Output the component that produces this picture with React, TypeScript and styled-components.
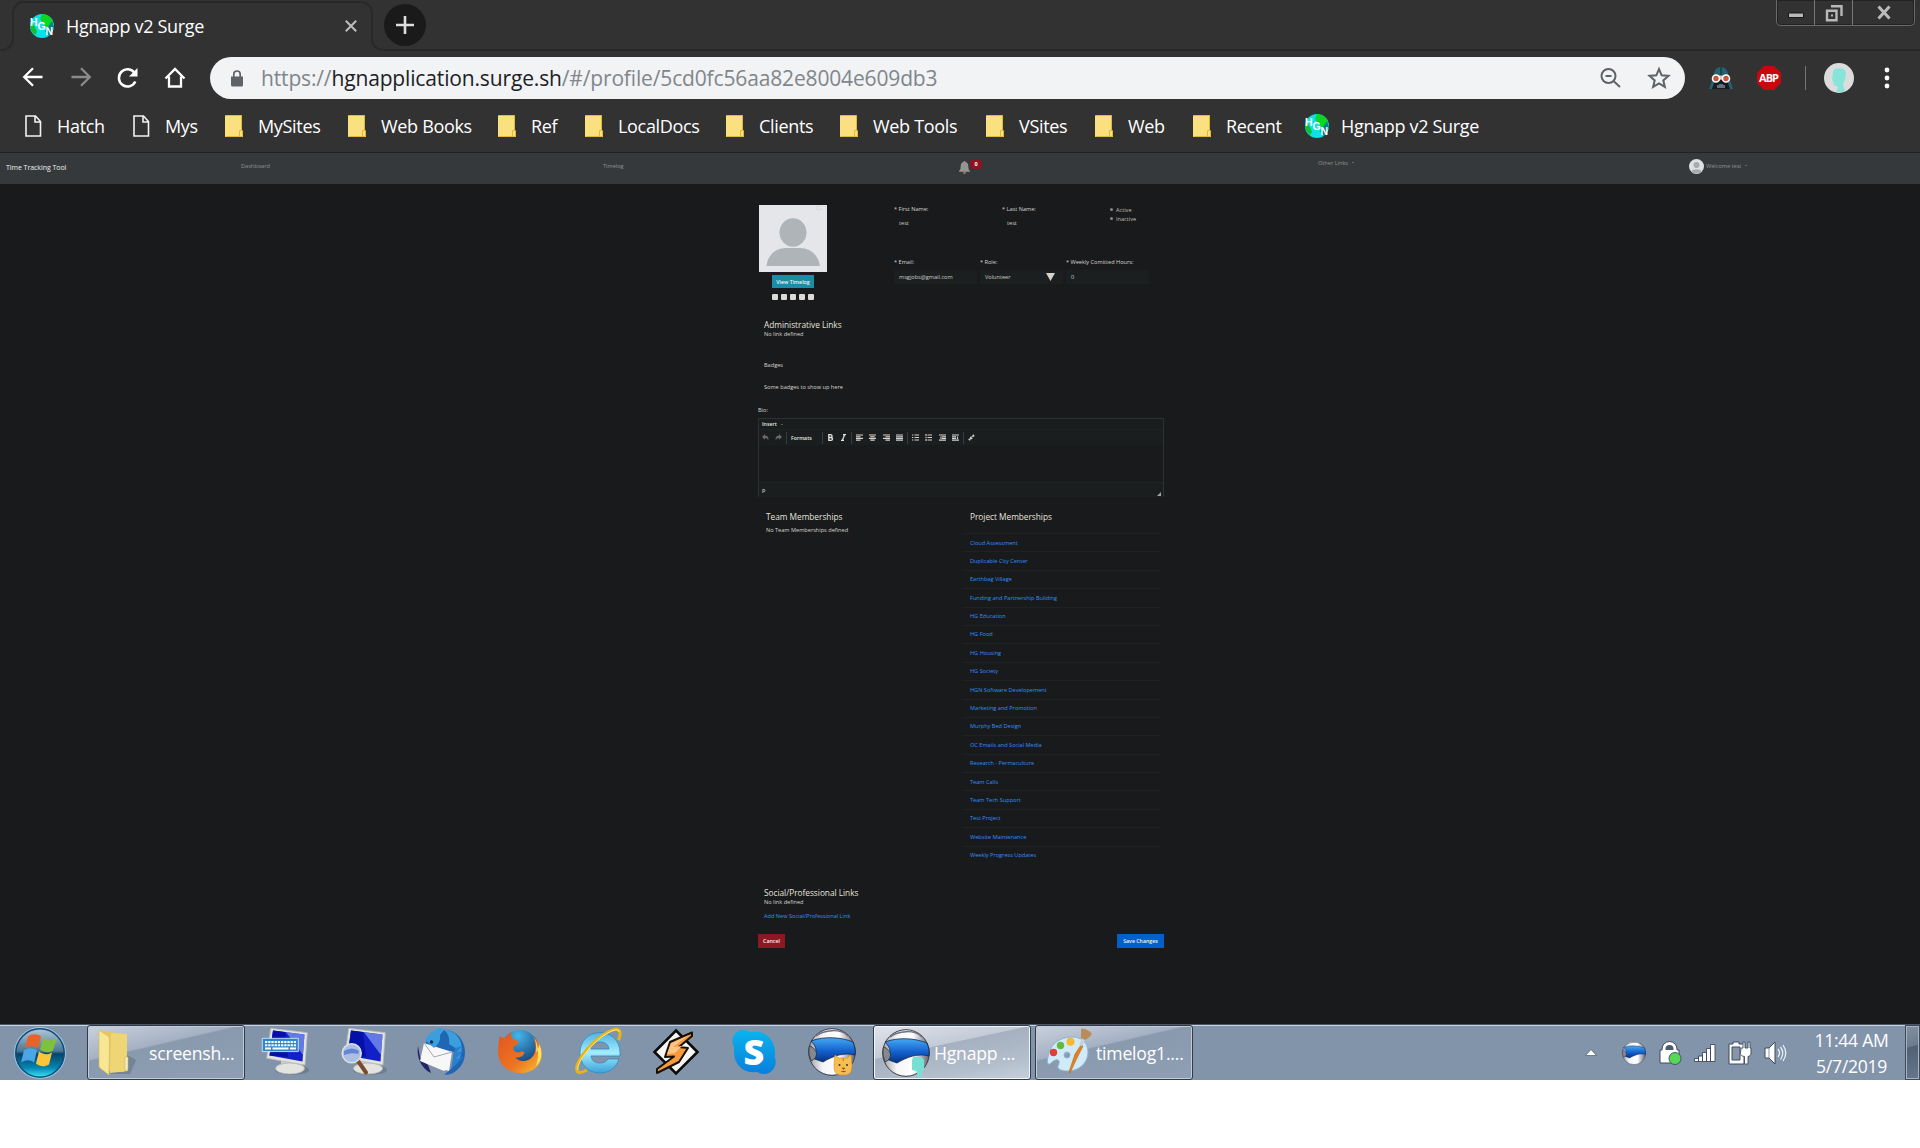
import React from "react";
import styled, { createGlobalStyle } from "styled-components";

const Global = createGlobalStyle`
  * { box-sizing: border-box; }
  body { margin: 0; background: #fff; font-family: "Open Sans", "Noto Sans", sans-serif; }
  svg { display: block; flex: none; overflow: visible; }
`;

const Screen = styled.div`
  width: 1920px;
  height: 1148px;
  display: flex;
  flex-direction: column;
  background: #fff;
  overflow: hidden;
`;

/* ---------- browser chrome ---------- */
const Chrome = styled.header`
  height: 153px;
  flex: none;
  background: #323232;
  color: #fff;
  border-bottom: 1px solid #222324;
`;

const TabStrip = styled.div`
  height: 51px;
  display: flex;
`;
const StripLeft = styled.div`
  width: 14px;
  height: 26px;
  margin-top: 25px;
  border: 2px solid #292929;
  border-width: 0 2px 2px 0;
  border-radius: 0 0 12px 0;
`;
const Tab = styled.div`
  position: relative;
  width: 361px;
  margin-left: -2px;
  height: 51px;
  padding: 0 16px 0 18px;
  display: flex;
  align-items: center;
  &::before {
    content: "";
    position: absolute;
    inset: 1px 0 24px 0;
    border: 2px solid #292929;
    border-bottom: 0;
    border-radius: 12px 12px 0 0;
  }
`;
const TabTitle = styled.span`
  flex: 1;
  margin-left: 12px;
  font-size: 18px;
  line-height: 24px;
  letter-spacing: -0.32px;
  white-space: nowrap;
`;
const StripRight = styled.div`
  flex: 1;
  margin-left: -2px;
  height: 51px;
  position: relative;
  display: flex;
  justify-content: space-between;
  &::before {
    content: "";
    position: absolute;
    inset: 25px 0 0 0;
    border: 2px solid #292929;
    border-width: 0 0 2px 2px;
    border-radius: 0 0 0 12px;
  }
`;
const NewTab = styled.button`
  position: relative;
  width: 42px;
  height: 42px;
  margin: 4px 0 0 13px;
  padding: 0;
  border: 0;
  border-radius: 50%;
  background: #1a1a1a;
  display: grid;
  place-items: center;
`;
const WindowControls = styled.div`
  position: relative;
  display: flex;
  width: 139px;
  height: 26px;
  margin-right: 5px;
  border: 1px solid #6a6a6a;
  border-top: 0;
  border-radius: 0 0 5px 5px;
  box-shadow: inset 0 0 0 1px #222;
`;
const WinButton = styled.div<{ $w: number }>`
  width: ${(p) => p.$w}px;
  display: grid;
  place-items: center;
  & + & { border-left: 1px solid #777; }
`;

const Toolbar = styled.div`
  height: 54px;
  padding: 0 22px;
  display: flex;
  align-items: center;
`;
const NavIcons = styled.div`
  width: 188px;
  display: flex;
  gap: 24px;
`;
const Omnibox = styled.div`
  width: 1475px;
  height: 42px;
  border-radius: 21px;
  background: #f1f3f5;
  display: flex;
  align-items: center;
  padding: 0 15px 0 21px;
`;
const Url = styled.span`
  flex: 1;
  margin-left: 18px;
  font-size: 21px;
  line-height: 30px;
  letter-spacing: -0.15px;
  color: #80868b;
  white-space: nowrap;
  b { font-weight: 400; color: #202124; }
`;
const OmniIcons = styled.div`
  display: flex;
  gap: 26px;
`;
const Extensions = styled.div`
  flex: 1;
  display: flex;
  align-items: center;
  padding-left: 24px;
`;
const Divider = styled.i`
  width: 1px;
  height: 24px;
  margin: 0 18px 0 24px;
  background: #777;
`;

const Bookmarks = styled.div`
  height: 42px;
  padding-left: 25px;
  display: flex;
  align-items: center;
`;
const Bookmark = styled.div<{ $w: number; $gap?: number }>`
  width: ${(p) => p.$w}px;
  display: flex;
  align-items: center;
  gap: ${(p) => p.$gap ?? 15}px;
  font-size: 18px;
  line-height: 24px;
  letter-spacing: -0.32px;
  white-space: nowrap;
`;

/* ---------- application ---------- */
const Page = styled.main`
  height: 871px;
  flex: none;
  background: #181a1b;
  color: #d8d5d0;
  font-size: 5.6px;
  line-height: 8px;
`;
const NavBar = styled.nav`
  height: 31px;
  background: #35393b;
  display: flex;
  padding-left: 6px;
  color: #96928b;
`;
const NavCell = styled.div<{ $w: number; $top: number }>`
  width: ${(p) => p.$w}px;
  padding-top: ${(p) => p.$top}px;
  display: flex;
  align-items: flex-start;
  white-space: nowrap;
`;
const Brand = styled.span`
  color: #f0efed;
  font-size: 7px;
  line-height: 10px;
  letter-spacing: -0.05px;
`;
const Caret = styled.i`
  margin: 3px 0 0 4px;
  border: 1.5px solid transparent;
  border-top-color: #96928b;
  border-bottom: 0;
`;
const Count = styled.span`
  width: 12px;
  height: 9px;
  margin-top: -1px;
  border-radius: 3px;
  background: #8d1420;
  color: #fff;
  font-size: 5.5px;
  line-height: 9px;
  font-weight: 700;
  text-align: center;
`;
const WelcomeText = styled.span`
  margin: 3px 0 0 2px;
  & + i { margin-top: 6px; }
`;

const Profile = styled.div`
  width: 406px;
  margin-left: 758px;
  padding-top: 21px;
  display: flex;
  flex-direction: column;
`;
const TopRow = styled.section`
  height: 107px;
  display: flex;
`;
const PhotoColumn = styled.div`
  width: 136px;
  padding-left: 1px;
`;
const PhotoActions = styled.div`
  width: 68px;
  display: flex;
  flex-direction: column;
  align-items: center;
`;
const Button = styled.button<{ $bg: string; $w: number; $h: number }>`
  width: ${(p) => p.$w}px;
  height: ${(p) => p.$h}px;
  padding: 0;
  border: 0;
  background: ${(p) => p.$bg};
  color: #f3f2f0;
  font: 600 5.3px/8px "Open Sans", "Noto Sans", sans-serif;
  letter-spacing: -0.03px;
  white-space: nowrap;
`;
const Squares = styled.div`
  display: flex;
  gap: 3px;
  margin-top: 6px;
  i { width: 6px; height: 6px; border-radius: 1px; background: #dcdad6; }
`;
const Fields = styled.div`
  flex: 1;
`;
const NameRow = styled.div`
  display: flex;
  height: 53px;
`;
const Field = styled.div<{ $w: number }>`
  width: ${(p) => p.$w}px;
  white-space: nowrap;
`;
const Value = styled.div<{ $filled?: boolean }>`
  height: 14px;
  margin-top: ${(p) => (p.$filled ? 4 : 3)}px;
  padding: 0 8px 0 5px;
  line-height: 14px;
  color: #cfccc5;
  display: flex;
  align-items: center;
  justify-content: space-between;
  background: ${(p) => (p.$filled ? "#1c1f20" : "transparent")};
`;
const Choice = styled.div`
  height: 9px;
  display: flex;
  align-items: center;
  gap: 3px;
  color: #c3bfb8;
  i { width: 3px; height: 3px; border-radius: 50%; background: #8a8780; }
`;
const InputRow = styled.div`
  display: flex;
  gap: 3px;
`;
const Card = styled.section<{ $h: number; $mt?: number; $pt?: number }>`
  height: ${(p) => p.$h}px;
  margin: ${(p) => p.$mt ?? 0}px -1px 0 -2px;
  padding: ${(p) => p.$pt ?? 0}px 0 0 7px;
  border: 1px solid #191c1d;
  border-radius: 2px;
`;
const Heading = styled.h2`
  margin: 0;
  font-size: 8.3px;
  line-height: 12px;
  font-weight: 500;
  letter-spacing: -0.02px;
  color: #e6e3de;
`;
const Line = styled.div<{ $mt?: number }>`
  margin-top: ${(p) => p.$mt ?? 0}px;
  white-space: nowrap;
`;
const LinkText = styled.a`
  color: #3391ff;
`;

const Editor = styled.section`
  height: 79px;
  width: 406px;
  margin-top: 4px;
  border: 1px solid #2d3132;
  border-bottom-color: #1d2021;
  display: flex;
  flex-direction: column;
  color: #e8e6e3;
`;
const MenuBar = styled.div`
  height: 11px;
  padding-left: 3px;
  display: flex;
  align-items: center;
  background: #1a1d1e;
  border-bottom: 1px solid #202324;
  font-weight: 600;
  font-size: 5.2px;
`;
const Tools = styled.div`
  height: 15px;
  padding-left: 3px;
  display: flex;
  align-items: center;
  background: #1b1e1f;
`;
const ToolGroup = styled.div<{ $w: number }>`
  width: ${(p) => p.$w}px;
  height: 12px;
  display: flex;
  align-items: center;
  gap: 6.4px;
  font-size: 5.2px;
  font-weight: 600;
  & + & { border-left: 1px solid #373c3e; padding-left: 4px; }
`;
const Canvas = styled.div`
  flex: 1;
  border-bottom: 1px solid #202324;
`;
const Status = styled.div`
  height: 13px;
  padding: 0 2px 0 3px;
  background: #1b1e1f;
  display: flex;
  justify-content: space-between;
  align-items: center;
  svg { align-self: flex-end; }
`;
const Columns = styled.div`
  height: 377px;
  display: flex;
  padding-top: 14px;
`;
const Team = styled.div`
  width: 204px;
  padding-left: 8px;
`;
const Projects = styled.div`
  width: 199px;
`;
const ProjectTitle = styled.div`
  padding-left: 8px;
  height: 22px;
`;
const ProjectRow = styled.div`
  height: 18.4px;
  padding: 4.5px 0 0 8px;
  border-top: 1px solid #1f2223;
`;
const Footer = styled.div`
  display: flex;
  justify-content: space-between;
  margin-top: 6px;
`;

/* ---------- taskbar ---------- */
const TaskbarRoot = styled.footer`
  height: 56px;
  flex: none;
  display: flex;
  background: #8294aa;
  border-top: 1px solid #4c5666;
  box-shadow: inset 0 1px 0 #c9d3e0;
  color: #fff;
`;
const Start = styled.div`
  width: 87px;
  padding: 2px 0 0 14px;
`;
const TaskButton = styled.div<{ $active?: boolean; $gap: number; $pad: number }>`
  width: 158px;
  height: 55px;
  padding-left: ${(p) => p.$pad}px;
  display: flex;
  align-items: center;
  gap: ${(p) => p.$gap}px;
  border: 1px solid #303a49;
  border-radius: 3px;
  box-shadow: inset 0 0 0 1px ${(p) => (p.$active ? "#f3f6fa" : "#c2ccd8")};
  background: ${(p) =>
    p.$active
      ? "linear-gradient(168deg,#dfe4ec 0%,#c4cbd7 38%,#a5b0c0 39%,#b4bfcd 75%,#c6d0dc 100%)"
      : "linear-gradient(167deg,#c9d1dd 0%,#a5b1c3 38%,#8999ae 40%,#8e9fb4 100%)"};
  font-size: 17.6px;
  line-height: 24px;
  letter-spacing: -0.2px;
  white-space: nowrap;
`;
const Pinned = styled.div`
  width: 628px;
  padding-top: 3px;
  display: flex;
  & > div { width: 78.2px; padding-left: 16px; }
`;
const Tray = styled.div`
  flex: 1;
  display: flex;
  align-items: center;
  justify-content: flex-end;
`;
const TrayIcons = styled.div`
  display: flex;
  align-items: center;
  gap: 12px;
`;
const Clock = styled.div`
  width: 118px;
  display: flex;
  flex-direction: column;
  align-items: center;
  font-size: 17.6px;
  line-height: 26px;
  letter-spacing: -0.3px;
  padding: 1px 2px 0 13px;
`;
const ShowDesktop = styled.div`
  width: 15px;
  height: 55px;
  border: 1px solid #3e4a5a;
  box-shadow: inset 0 0 0 1px #a6b3c2;
  background: linear-gradient(165deg, #8290a2 0%, #6c7b8f 38%, #526174 40%, #66778c 100%);
`;

/* ---------- drawings ---------- */
const HgnIcon = () => (
  <svg width="24" height="24" viewBox="0 0 24 24">
    <circle cx="12" cy="12" r="12" fill="#0ae0e8" />
    <path d="M12 0a12 12 0 0 1 11 8l-6 6-4-5-3-4z" fill="#08d820" />
    <path d="M1 8l4 5 2 5-2 3A12 12 0 0 1 1 8z" fill="#0bc22a" />
    <path d="M22 7l2 6-5 9-4-5z" fill="#087f86" />
    <g fill="#fff" fontFamily="Liberation Sans, sans-serif" fontWeight="700" fontSize="10.5">
      <text x="0" y="11.5">H</text>
      <text x="7.5" y="16">G</text>
      <text x="15.5" y="20.5">N</text>
    </g>
  </svg>
);
const PageIcon = () => (
  <svg width="17" height="22" viewBox="0 0 17 22" fill="none" stroke="#f2f2f2" strokeWidth="1.6">
    <path d="M1 1h9.5l5 5.5V21H1zM10 1v6h5.5" />
  </svg>
);
const FolderIcon = () => (
  <svg width="18" height="22" viewBox="0 0 18 22">
    <path d="M0 .5h17V16l1 1v5H0z" fill="#fbe07f" />
    <path d="M.5.5h16V15M.5 21.5h17V15.500h-3v6" fill="none" stroke="#e2b93b" />
  </svg>
);
const PersonIcon = ({ w, h }: { w: number; h: number }) => (
  <svg width={w} height={h} viewBox="0 0 68 67">
    <path d="M0 0h68v67H0z" fill="#e5e6e9" />
    <ellipse cx="34" cy="27.500" rx="13.500" ry="14.300" fill="#aeb4b8" />
    <path d="M7.500 61C8.500 50 17 43 27 43h14c10 0 18.500 7 20 18z" fill="#aeb4b8" />
    {w > 20 && <path d="M58 1h3M58 1v4h4V3" fill="none" stroke="#d5d7da" />}
  </svg>
);
const RoundPerson = () => (
  <svg width="15" height="15" viewBox="0 0 15 15">
    <circle cx="7.500" cy="7.500" r="7.500" fill="#dfe0e1" />
    <circle cx="7.500" cy="6" r="3" fill="#a7abae" />
    <path d="M2.300 12.500c1-3 9.400-3 10.400 0a7.500 7.500 0 0 1-10.400 0z" fill="#a7abae" />
  </svg>
);
const Bell = () => (
  <svg width="11" height="13" viewBox="0 0 11 13" fill="#96958f">
    <path d="M5.500 0c.7 0 1 .5 1 1 2 .5 2.800 2 2.800 4 0 3 .6 4 1.700 5v.8H0V10c1.100-1 1.700-2 1.700-5 0-2 .8-3.500 2.800-4 0-.5.300-1 1-1zM4 11.300h3a1.500 1.500 0 0 1-3 0z" />
  </svg>
);

const BackIcon = ({ color, flip }: { color: string; flip?: boolean }) => (
  <svg width="21" height="20" viewBox="0 0 21 20" fill="none" stroke={color} strokeWidth="2.300">
    <path transform={flip ? "matrix(-1 0 0 1 21 0)" : undefined} d="M20.500 10H2.500M11 1.200L2.200 10l8.800 8.800" />
  </svg>
);
const ReloadIcon = () => (
  <svg width="24" height="22" viewBox="0 0 24 22" fill="none" stroke="#fff" strokeWidth="2.500">
    <path d="M19.300 14.500A8.600 8.600 0 1 1 18.600 6" />
    <path d="M21.500 1v8.500H13z" fill="#fff" stroke="none" />
  </svg>
);
const HomeIcon = () => (
  <svg width="22" height="22" viewBox="0 0 22 22" fill="none" stroke="#fff" strokeWidth="2.300">
    <path d="M1.500 11.500L11 2l9.500 9.500M5 9.500v10h12v-10" />
  </svg>
);
const LockIcon = () => (
  <svg width="12" height="17" viewBox="0 0 12 17">
    <path d="M0 6.500h12V15a1.500 1.500 0 0 1-1.500 1.500h-9A1.500 1.500 0 0 1 0 15z" fill="#5f6368" />
    <path d="M2.800 7V4.200a3.200 3.200 0 0 1 6.400 0V7" fill="none" stroke="#5f6368" strokeWidth="1.700" />
  </svg>
);
const ZoomOutIcon = () => (
  <svg width="22" height="22" viewBox="0 0 22 22" fill="none" stroke="#5f6368" strokeWidth="2">
    <circle cx="8.500" cy="9" r="7" />
    <path d="M5.500 9h6M13.500 14l6.500 6" />
  </svg>
);
const StarIcon = () => (
  <svg width="22" height="22" viewBox="0 0 24 24" fill="none" stroke="#5f6368" strokeWidth="2.200">
    <path d="M12 2.200l2.900 6.900 7.400.6-5.600 4.900 1.700 7.200-6.400-3.900-6.400 3.900 1.700-7.200-5.600-4.900 7.400-.6z" />
  </svg>
);
const VaderIcon = () => (
  <svg width="24" height="24" viewBox="0 0 24 24">
    <path d="M12 1c5 0 7 4 7.500 9L24 23H0l4.500-13C5 5 7 1 12 1z" fill="#25616f" />
    <path d="M6 14h12l3 9H3z" fill="#151b25" />
    <path d="M12 1v9" stroke="#122b34" />
    <path d="M4 9.500h16v4H4z" fill="#e6c7b5" />
    <g fill="#c4573c" stroke="#fff" strokeWidth="1.600">
      <circle cx="7" cy="12.500" r="3.500" />
      <circle cx="17" cy="12.500" r="3.500" />
    </g>
    <path d="M9 19v3M11 18v4M13 18v4M15 19v3" stroke="#c7d8e0" strokeWidth=".9" />
  </svg>
);
const AbpIcon = () => (
  <svg width="24" height="24" viewBox="0 0 24 24">
    <path d="M7 0h10l7 7v10l-7 7H7l-7-7V7z" fill="#c9080d" />
    <text x="12" y="16" textAnchor="middle" fontFamily="Open Sans, sans-serif" fontWeight="700" fontSize="11" fill="#fff" textLength="20">ABP</text>
  </svg>
);
const ProfileHead = () => (
  <svg width="30" height="30" viewBox="0 0 30 30">
    <circle cx="15" cy="15" r="15" fill="#dcdcdc" />
    <path d="M11 6c4-1.500 9-1 10.500 2 1 3 0 8-1.500 11l-1 3 2 6-4 1.500-5-1 2-4-1-1.500c-3 0-3.500-1-3.500-4l-1.500-2 .500-3c0-4 .5-7 2.500-8z" fill="#86e5d8" />
  </svg>
);

const WinFlag = () => (
  <g>
    <path d="M15 10c4-3 9-3 13 0l-3 12c-4-3-9-3-13 0z" fill="#e8622a" />
    <path d="M30 11c4 3 9 4 14 1l-4 12c-4 3-9 2-13-1z" fill="#7fc043" />
    <path d="M11 24c4-3 9-3 13 0l-3 12c-4-3-8-3-13 0z" fill="#4aa6e6" />
    <path d="M26 25c4 3 9 4 13 1l-3 12c-5 3-9 2-13-1z" fill="#fcc63a" />
  </g>
);
const StartOrb = () => (
  <svg width="52" height="52" viewBox="0 0 52 52">
    <defs>
      <linearGradient id="orbTop" x1="0" y1="0" x2="0" y2="1">
        <stop offset="0" stopColor="#b7cad8" />
        <stop offset=".46" stopColor="#4b7996" />
        <stop offset=".52" stopColor="#064367" />
        <stop offset=".8" stopColor="#0788b5" />
        <stop offset="1" stopColor="#3ff5ff" />
      </linearGradient>
    </defs>
    <circle cx="26" cy="26" r="25.300" fill="url(#orbTop)" stroke="#9bc9e6" strokeWidth="1.200" />
    <circle cx="26" cy="26" r="24.200" fill="none" stroke="#124a76" strokeWidth="1.400" />
    <g transform="translate(-1 -.5)"><WinFlag /></g>
  </svg>
);
const TaskFolder = () => (
  <svg width="35" height="48" viewBox="0 0 35 48">
    <path d="M28 26l9 5-6 14-20 0z" fill="#5d6b7d" opacity=".5" />
    <path d="M1 2l27 3v36l-4 2-14-1z" fill="#e4c75e" />
    <path d="M12 4l16 1v24l1 2v11l-18 2z" fill="#efd675" />
    <path d="M0 1l9 6c1 1 1.500 2 1.500 4L10 46 1 39C0 38 0 37 0 36z" fill="#f8e695" stroke="#d8bc57" strokeWidth=".7" />
    <path d="M26 28h3v12l-3 2z" fill="#f4eed2" stroke="#d0b452" strokeWidth=".6" />
  </svg>
);
const MonitorBase = () => (
  <g>
    <ellipse cx="31" cy="42" rx="17" ry="5" fill="#4e5d70" opacity=".4" />
    <path d="M20 32h13l2 5H20z" fill="#cfcfca" />
    <ellipse cx="29" cy="40.500" rx="14.500" ry="5.500" fill="#e3e3df" stroke="#b3b4b2" strokeWidth=".8" />
    <path d="M9.700 .3L46.300 4.700 44 37 5.700 30.300z" fill="#e3e4df" stroke="#b9bbb8" strokeWidth=".8" />
    <path d="M12 2.500L43.500 6.500 41.500 33.500 8.500 27.500z" fill="#1220c8" />
    <path d="M25 4.200L43.500 6.500 42 27z" fill="#7f97ee" opacity=".75" />
    <path d="M12 2.500L24 4l3 25-18.500-1.500z" fill="#0510a8" />
  </g>
);
const KeyboardMonitor = () => (
  <svg width="48" height="48" viewBox="0 0 48 48">
    <MonitorBase />
    <path d="M1.300 10.300h36v13.300h-36z" fill="#2f86c8" stroke="#cfe6f5" strokeWidth=".9" />
    <g stroke="#fff" strokeWidth="2">
      <path d="M4 14h31M4 17.300h31" strokeDasharray="2.300 .9" />
      <path d="M4 20.600h6M11.500 20.600h16M29 20.600h6" />
    </g>
  </svg>
);
const SearchMonitor = () => (
  <svg width="48" height="48" viewBox="0 0 48 48">
    <MonitorBase />
    <path d="M19 33l8 11.500" stroke="#7a4c2c" strokeWidth="4" strokeLinecap="round" />
    <circle cx="12.700" cy="25.300" r="9.500" fill="#a9c0e4" stroke="#d9dfe6" strokeWidth="1.600" />
    <path d="M5 23q8-5 15 0l-1 3q-7-2-14 1z" fill="#5474cf" opacity=".8" />
  </svg>
);
const Thunderbird = () => (
  <svg width="48" height="48" viewBox="0 0 48 48">
    <path d="M20 3c8-3 19 0 24 8 6 9 5 21-1 28-4 5-9 8-16 8l8-7 2-16L8 17C10 9 14 5 20 3z" fill="#1f66b5" />
    <path d="M1 18C-1 30 5 41 14 45l-3-8-8-8z" fill="#24246b" />
    <path d="M7 15l28 9-3 19-3-1-2 1-24-10z" fill="#f7f7f8" />
    <path d="M7 15l10 14 18-5" fill="none" stroke="#a5a9b3" />
    <path d="M24 0c-7 1-13 6-16 12l9 8c4-3 7-8 6-13l4-5c4 3 6 8 5 14l8 5-3 17c6-6 9-14 7-23C42 7 34 1 27 2z" fill="#3b9fde" />
    <path d="M38 20l7-2-5 6 6-1-7 8 7-2-12 12z" fill="#2a80cc" />
    <circle cx="14.500" cy="14" r="1.700" fill="#0d2a50" />
  </svg>
);
const Firefox = () => (
  <svg width="48" height="48" viewBox="0 0 48 48">
    <defs>
      <linearGradient id="fox" x1="0" y1="0" x2="1" y2="1">
        <stop offset="0" stopColor="#e0551f" />
        <stop offset=".6" stopColor="#ee7422" />
        <stop offset="1" stopColor="#f6c433" />
      </linearGradient>
      <radialGradient id="sea" cx=".45" cy=".15" r=".9">
        <stop offset="0" stopColor="#46b5ea" />
        <stop offset="1" stopColor="#0c2b66" />
      </radialGradient>
    </defs>
    <circle cx="24" cy="21" r="19" fill="url(#sea)" />
    <path d="M4 8c2 2 3 2 5 2 2-3 4-5 6-6-1 3 1 6 3 8 4 0 5 2 4 4l-5 3c0 4 3 6 7 5 3-1 5 0 4 2-3 4-7 4-9 3 4 6 14 5 18-1 4-5 3-14 0-19 5 4 9 10 9 17 0 11-9 19-21 19C11 45 2 36 2 24 2 17 3 12 4 8z" fill="url(#fox)" />
    <path d="M35 5c5 4 6 14 5 20 2-3 3-6 3-9 4 7 3 17-3 22 3-8 4-23-5-33z" fill="#fbe36b" />
  </svg>
);
const Explorer = () => (
  <svg width="48" height="48" viewBox="0 0 48 48">
    <defs>
      <linearGradient id="ie" x1="0" y1="0" x2="0" y2="1">
        <stop offset="0" stopColor="#4fb2e3" />
        <stop offset=".5" stopColor="#a3ecfd" />
        <stop offset="1" stopColor="#3ba2da" />
      </linearGradient>
    </defs>
    <path
      fillRule="evenodd"
      d="M26 4.500c11 0 20 8 20 20v3.500H17c1 5 4 7 9 7 4 0 6-1.500 8-4h11c-3 9-10 14-19 14C14 45 6 36.500 6 25S14 4.500 26 4.500zM17 21h18c-.5-4.500-4-7-9-7s-8.500 2.500-9 7z"
      fill="url(#ie)" stroke="#2b8bc4" strokeWidth=".8"
    />
    <path d="M13 42C8 45 4 45 3 43 0 36 14 17 29 7 38 1 45-1 46 4c.4 2 0 5-1.500 8" fill="none" stroke="#e9b416" strokeWidth="3" />
    <path d="M4 42C2 36 15 18 29 8 38 2 44 0 45 4" fill="none" stroke="#fff08a" strokeWidth="1" />
  </svg>
);
const Winamp = () => (
  <svg width="48" height="48" viewBox="0 0 48 48">
    <path d="M24 2.500L45.500 24 24 45.500 2.500 24z" fill="#f6f6f4" stroke="#0b0b0b" strokeWidth="2.600" />
    <path d="M40 4.500L18 14 13 29l9-.5L5 41v4L27 34l9-14-9-1 13-11z" fill="#f79a3c" stroke="#161007" strokeWidth="2" strokeLinejoin="round" />
    <path d="M37 7L19 15.500 15 26l8-1 7-7-9 1z" fill="#fdc489" />
  </svg>
);
const Skype = () => (
  <svg width="48" height="48" viewBox="0 0 48 48">
    <defs>
      <linearGradient id="sky" x1="0" y1="0" x2="0" y2="1">
        <stop offset="0" stopColor="#09b4ee" />
        <stop offset="1" stopColor="#0a7fdb" />
      </linearGradient>
    </defs>
    <path d="M13 2c3 0 5 .6 7 2 13-3 25 7 25 20 0 2 0 3-.3 4.500C48 37 43 46 34 46c-3 0-5-.7-7-2C14 46 4 37 4 24c0-2 0-3 .4-4.500C-.5 11 5 2 13 2z" fill="url(#sky)" />
    <text x="24" y="36.500" textAnchor="middle" fontFamily="Open Sans, sans-serif" fontSize="36" fontWeight="800" fill="#fff">S</text>
  </svg>
);
const Helmet = ({ size = 48, badge }: { size?: number; badge?: "cat" | "head" }) => (
  <svg width={size} height={size} viewBox="0 0 48 48">
    <defs>
      <linearGradient id="shell" x1="0" y1="0" x2="1" y2="0">
        <stop offset="0" stopColor="#9b9ca4" />
        <stop offset=".3" stopColor="#f5f5f7" />
        <stop offset=".65" stopColor="#ffffff" />
        <stop offset=".85" stopColor="#a3a5ad" />
        <stop offset="1" stopColor="#5f626c" />
      </linearGradient>
      <linearGradient id="visor" x1="0" y1="0" x2="0" y2="1">
        <stop offset="0" stopColor="#45a8f2" />
        <stop offset=".55" stopColor="#1360ce" />
        <stop offset="1" stopColor="#08307e" />
      </linearGradient>
    </defs>
    <circle cx="24" cy="24" r="23.300" fill="url(#shell)" stroke="#3a3d46" />
    <path d="M3 13c13-5 30-4 42 1 2 5 2.500 9 2 13-11-3-22 1-32 7L4 30c6-5 5-11-1-17z" fill="url(#visor)" stroke="#152848" strokeWidth=".8" />
    <path d="M1.500 18c4 1 7 5 7 8s-2 5-5 7C.8 28 .5 23 1.500 18z" fill="#858891" stroke="#2e3038" strokeWidth=".8" />
    <path d="M8 8C16 2 32 0 40 8" fill="none" stroke="#6d707a" strokeWidth="1.300" />
    {badge === "cat" && (
      <g>
        <path d="M27 27l4 3h8l4-3 1 10c0 7-2 10-8 10h-3c-5 0-7-3-7-10z" fill="#f8bd50" stroke="#d28b28" strokeWidth=".6" />
        <circle cx="31.500" cy="37" r="1" fill="#333" />
        <circle cx="39" cy="37" r="1" fill="#333" />
        <path d="M34 40h3l-1.500 1.500zM33 43q2.500 2 5 0M35.300 30v3" stroke="#a55d1c" fill="#733" strokeWidth=".7" />
      </g>
    )}
    {badge === "head" && <path d="M31 28h8l3 3v10l-2 2v5h-5v-6l-5-1v-10z" fill="#78e0d2" />}
  </svg>
);
const Palette = () => (
  <svg width="46" height="48" viewBox="0 0 46 48">
    <path d="M2 28C4 14 15 8 26 8c10 0 16 6 16 15 0 11-9 19-20 19-7 0-11-2-10-5 1-2 2-5 0-6-3-1-6 2-8 4-3 1-3-3-2-7zm16-2a3 3 0 1 0 6 0 3 3 0 1 0-6 0z" fillRule="evenodd" fill="#d1eaf8" stroke="#8ab5d5" />
    <circle cx="7.500" cy="23.500" r="3.700" fill="#dc4038" />
    <circle cx="14.500" cy="16.500" r="3.700" fill="#62bb40" />
    <circle cx="24.500" cy="12.800" r="4" fill="#f9b72b" />
    <path d="M35 16l2 1-6 12-7 15-1-1 6-18z" fill="#e08324" stroke="#b86515" strokeWidth=".6" />
    <path d="M36 9l3 2-3 6-3-1z" fill="#c8d1d9" />
    <path d="M35 0c3-1 8 1 11 5-2 3-5 5-7 6l-4-2z" fill="#b98d5a" />
  </svg>
);

const TrayLock = () => (
  <svg width="24" height="24" viewBox="0 0 24 24">
    <path d="M2 9h2V8a7.500 7.500 0 0 1 15 0v1h2v13H2z" fill="#fff" stroke="#3c4a5c" />
    <path d="M7.500 9V8a4 4 0 0 1 8 0v1z" fill="#4b5a6d" />
    <circle cx="17" cy="17.500" r="6" fill="#55d955" stroke="#44566a" />
  </svg>
);
const Signal = () => (
  <svg width="22" height="18" viewBox="0 0 22 18" fill="#fff" stroke="#3c4a5c" strokeWidth=".9">
    <path d="M.5 14.500h4v3h-4zM4.500 12h4v5.500h-4zM8.500 8.500h4v9h-4zM12.500 4.500h4v13h-4zM16.500 .5h4.500v17h-4.500z" />
  </svg>
);
const Battery = () => (
  <svg width="24" height="24" viewBox="0 0 24 24">
    <path d="M5 3V1h6v2h5v20H1V3z" fill="#fff" stroke="#3c4a5c" />
    <path d="M4 6h8v13H4z" fill="#8795a8" stroke="#3c4a5c" />
    <path d="M13 7h2V1h2v6h3V1h2v6h1v5c0 2-1 3-3 3.500V23h-3.500v-7.500C13 15 12.500 14 12.500 12z" fill="#fff" stroke="#3c4a5c" strokeWidth=".9" />
  </svg>
);
const Speaker = () => (
  <svg width="23" height="24" viewBox="0 0 23 24">
    <path d="M1 7h4l6-6v22l-6-6H1z" fill="#fff" stroke="#3c4a5c" />
    <path d="M5 7v10" stroke="#8795a8" />
    <path d="M14 8q3 4 0 8M16.500 6q4.500 6 0 12.500M19 4q5.500 8 0 16" fill="none" stroke="#e8edf3" strokeWidth="1.300" />
  </svg>
);

/* Editor toolbar glyphs, each on a 7x7 grid */
const glyphs: Record<string, string> = {
  left: "M0 1h7M0 2.700h4.500M0 4.400h7M0 6.100h4.500",
  center: "M0 1h7M1.300 2.700h4.400M0 4.400h7M1.300 6.100h4.400",
  right: "M0 1h7M2.500 2.700H7M0 4.400h7M2.500 6.100H7",
  justify: "M0 1h7M0 2.700h7M0 4.400h7M0 6.100h7",
  bullets: "M0 1h1.300M2.500 1H7M0 3.500h1.300M2.500 3.500H7M0 6h1.300M2.500 6H7",
  numbers: "M1 0v2M2.500 1H7M1 2.700v1.600M2.500 3.500H7M1 5v2M2.500 6H7",
  outdent: "M0 1h7M3 2.700h4M3 4.400h4M0 6.100h7M2 2.500v2.500",
  indent: "M0 1h7M0 2.700h4M0 4.400h4M0 6.100h7M5.500 2.500v2.500",
  link: "M1.200 6L3 4M3.600 3.200L6 .9M.6 4.800l1.500 1.500M4.700 1l1.500 1.500M2.200 3l2 2",
};
const Glyph = ({ name }: { name: string }) => (
  <svg width="7" height="7" viewBox="0 0 7 7" fill="none" stroke="#d5d2cc" strokeWidth="1.150">
    <path d={glyphs[name]} />
  </svg>
);
const UndoGlyph = ({ flip }: { flip?: boolean }) => (
  <svg width="7" height="7" viewBox="0 0 7 7">
    <path transform={flip ? "matrix(-1 0 0 1 7 0)" : undefined} d="M3 0v1.800c3 0 4 2 3 4.700C5.700 4.700 5 4 3 4v1.800L0 2.900z" fill="#6b6a67" />
  </svg>
);

/* ---------- data ---------- */
const bookmarks: [string, number, "page" | "folder" | "hgn"][] = [
  ["Hatch", 108, "page"],
  ["Mys", 92, "page"],
  ["MySites", 123, "folder"],
  ["Web Books", 150, "folder"],
  ["Ref", 87, "folder"],
  ["LocalDocs", 141, "folder"],
  ["Clients", 114, "folder"],
  ["Web Tools", 146, "folder"],
  ["VSites", 109, "folder"],
  ["Web", 98, "folder"],
  ["Recent", 112, "folder"],
  ["Hgnapp v2 Surge", 190, "hgn"],
];
const markIcon = { page: <PageIcon />, folder: <FolderIcon />, hgn: <HgnIcon /> };

const projects = [
  "Cloud Assessment", "Duplicable City Center", "Earthbag Village", "Funding and Partnership Building",
  "HG Education", "HG Food", "HG Housing", "HG Society", "HGN Software Developement",
  "Marketing and Promotion", "Murphy Bed Design", "OC Emails and Social Media", "Research - Permaculture",
  "Team Calls", "Team Tech Support", "Test Project", "Website Maintenance", "Weekly Progress Updates",
];

const BrowserChrome = () => (
  <Chrome>
    <TabStrip>
      <StripLeft />
      <Tab>
        <HgnIcon />
        <TabTitle>Hgnapp v2 Surge</TabTitle>
        <svg width="12" height="12" viewBox="0 0 12 12" stroke="#bdbdbd" strokeWidth="2">
          <path d="M.8.8l10.400 10.400M11.200.8L.8 11.200" />
        </svg>
      </Tab>
      <StripRight>
        <NewTab>
          <svg width="18" height="18" viewBox="0 0 18 18" stroke="#dedede" strokeWidth="2.600">
            <path d="M9 0v18M0 9h18" />
          </svg>
        </NewTab>
        <WindowControls>
          <WinButton $w={37}>
            <svg width="16" height="25" viewBox="0 0 16 25"><path d="M.5 13h15v4.500H.5z" fill="#b8b8b8" stroke="#161616" /></svg>
          </WinButton>
          <WinButton $w={38}>
            <svg width="18" height="18" viewBox="0 0 18 18" fill="none" stroke="#b8b8b8" strokeWidth="2.400">
              <path d="M6 2.200h10.500V12M2 6.700h9.500v9.500H2z" />
              <path d="M6 10.500h2v2H6z" fill="#b8b8b8" stroke="none" />
            </svg>
          </WinButton>
          <WinButton $w={62}>
            <svg width="14" height="13" viewBox="0 0 14 13" stroke="#bababa" strokeWidth="3"><path d="M1.500.5l11 12M12.500.5l-11 12" /></svg>
          </WinButton>
        </WindowControls>
      </StripRight>
    </TabStrip>
    <Toolbar>
      <NavIcons>
        <BackIcon color="#fff" />
        <span style={{ marginLeft: 4 }}><BackIcon color="#8b8b8b" flip /></span>
        <ReloadIcon />
        <HomeIcon />
      </NavIcons>
      <Omnibox>
        <LockIcon />
        <Url>https://<b>hgnapplication.surge.sh</b>/#/profile/5cd0fc56aa82e8004e609db3</Url>
        <OmniIcons><ZoomOutIcon /><StarIcon /></OmniIcons>
      </Omnibox>
      <Extensions>
        <VaderIcon />
        <span style={{ marginLeft: 24 }}><AbpIcon /></span>
        <Divider />
        <ProfileHead />
        <span style={{ marginLeft: 30 }}>
          <svg width="6" height="24" viewBox="0 0 6 24" fill="#fff">
            <circle cx="3" cy="4" r="2.400" /><circle cx="3" cy="12" r="2.400" /><circle cx="3" cy="20" r="2.400" />
          </svg>
        </span>
      </Extensions>
    </Toolbar>
    <Bookmarks>
      {bookmarks.map(([label, w, kind]) => (
        <Bookmark key={label} $w={w} $gap={kind === "hgn" ? 12 : 15}>
          {markIcon[kind]}
          {label}
        </Bookmark>
      ))}
    </Bookmarks>
  </Chrome>
);

const App = () => (
  <Screen>
    <Global />
    <BrowserChrome />
    <Page>
      <NavBar>
        <NavCell $w={235} $top={10}><Brand>Time Tracking Tool</Brand></NavCell>
        <NavCell $w={362} $top={9}>Dashboard</NavCell>
        <NavCell $w={356} $top={9}>Timelog</NavCell>
        <NavCell $w={359} $top={8}><Bell /><Count>0</Count></NavCell>
        <NavCell $w={371} $top={6}>Other Links<Caret /></NavCell>
        <NavCell $w={200} $top={6}><RoundPerson /><WelcomeText>Welcome test</WelcomeText><Caret /></NavCell>
      </NavBar>
      <Profile>
        <TopRow>
          <PhotoColumn>
            <PersonIcon w={68} h={67} />
            <PhotoActions>
              <span style={{ height: 3 }} />
              <Button $bg="#1a8ea6" $w={42} $h={13}>View Timelog</Button>
              <Squares><i /><i /><i /><i /><i /></Squares>
            </PhotoActions>
          </PhotoColumn>
          <Fields>
            <NameRow>
              <Field $w={108}>* First Name:<Value>test</Value></Field>
              <Field $w={108}>* Last Name:<Value>test</Value></Field>
              <Field $w={50}><Choice><i />Active</Choice><Choice><i />Inactive</Choice></Field>
            </NameRow>
            <InputRow>
              <Field $w={83}>* Email:<Value $filled>msgjobs@gmail.com</Value></Field>
              <Field $w={83}>* Role:
                <Value $filled>Volunteer
                  <svg width="9" height="8" viewBox="0 0 9 8"><path d="M0 0h9L4.500 8z" fill="#d5d2cc" /></svg>
                </Value>
              </Field>
              <Field $w={83}>* Weekly Comitted Hours:<Value $filled>0</Value></Field>
            </InputRow>
          </Fields>
        </TopRow>
        <Card $h={37} $pt={6}><Heading>Administrative Links</Heading><Line $mt={-1}>No link defined</Line></Card>
        <Card $h={45} $mt={6} $pt={5}><Line>Badges</Line><Line $mt={14}>Some badges to show up here</Line></Card>
        <Line $mt={6}>Bio:</Line>
        <Editor>
          <MenuBar>Insert<Caret style={{ marginTop: 0 }} /></MenuBar>
          <Tools>
            <ToolGroup $w={24}><UndoGlyph /><UndoGlyph flip /></ToolGroup>
            <ToolGroup $w={36}><span>Formats</span></ToolGroup>
            <ToolGroup $w={29}>
              <svg width="7" height="7" viewBox="0 0 7 7" fill="none" stroke="#e8e6e3" strokeWidth="1.300">
                <path d="M1.800 .7v5.600h2c2.300 0 2.300-2.700 0-2.800h-2 1.600c2.300 0 2.200-2.800 0-2.800z" />
              </svg>
              <svg width="7" height="7" viewBox="0 0 7 7" fill="none" stroke="#e8e6e3" strokeWidth="1.200"><path d="M3 .6h3M1 6.400h3M4.700.6L2.300 6.400" /></svg>
            </ToolGroup>
            <ToolGroup $w={56}>{["left", "center", "right", "justify"].map((n) => <Glyph key={n} name={n} />)}</ToolGroup>
            <ToolGroup $w={56}>{["bullets", "numbers", "outdent", "indent"].map((n) => <Glyph key={n} name={n} />)}</ToolGroup>
            <ToolGroup $w={20}><Glyph name="link" /></ToolGroup>
          </Tools>
          <Canvas />
          <Status>p<svg width="4" height="4" viewBox="0 0 4 4"><path d="M4 0v4H0z" fill="#a5a29c" /></svg></Status>
        </Editor>
        <Columns>
          <Team><Heading>Team Memberships</Heading><Line $mt={3}>No Team Memberships defined</Line></Team>
          <Projects>
            <ProjectTitle><Heading>Project Memberships</Heading></ProjectTitle>
            {projects.map((name) => (
              <ProjectRow key={name}><LinkText>{name}</LinkText></ProjectRow>
            ))}
          </Projects>
        </Columns>
        <Card $h={50} $mt={4} $pt={8}>
          <Heading>Social/Professional Links</Heading>
          <Line $mt={-1}>No link defined</Line>
          <Line $mt={6}><LinkText>Add New Social/Professional Link</LinkText></Line>
        </Card>
        <Footer>
          <Button $bg="#8c1824" $w={27} $h={14}>Cancel</Button>
          <Button $bg="#0060cc" $w={47} $h={14}>Save Changes</Button>
        </Footer>
      </Profile>
    </Page>
    <TaskbarRoot>
      <Start><StartOrb /></Start>
      <TaskButton $gap={15} $pad={11}><TaskFolder />screensh...</TaskButton>
      <Pinned>
        <div><KeyboardMonitor /></div>
        <div><SearchMonitor /></div>
        <div><Thunderbird /></div>
        <div><Firefox /></div>
        <div><Explorer /></div>
        <div><Winamp /></div>
        <div><Skype /></div>
        <div><Helmet badge="cat" /></div>
      </Pinned>
      <TaskButton $active $gap={4} $pad={8}><Helmet badge="head" />Hgnapp ...</TaskButton>
      <span style={{ width: 4 }} />
      <TaskButton $gap={4} $pad={10}><Palette />timelog1....</TaskButton>
      <Tray>
        <TrayIcons>
          <svg width="12" height="7" viewBox="0 0 12 7" style={{ marginRight: 13 }}><path d="M6 .5l5.500 6H.5z" fill="#fff" stroke="#4b5a6d" strokeWidth=".7" /></svg>
          <Helmet size={24} />
          <TrayLock />
          <Signal />
          <Battery />
          <Speaker />
        </TrayIcons>
        <Clock><span>11:44 AM</span><span>5/7/2019</span></Clock>
        <ShowDesktop />
      </Tray>
    </TaskbarRoot>
  </Screen>
);

export default App;
